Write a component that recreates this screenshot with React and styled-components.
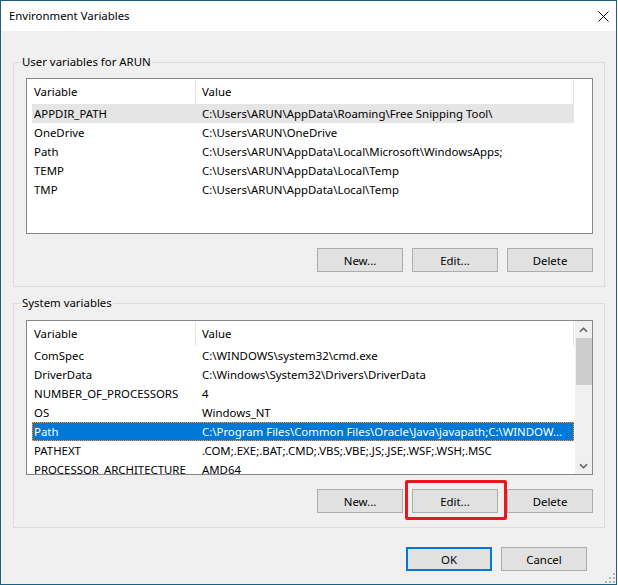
import React from "react";
import styled, { createGlobalStyle } from "styled-components";

const GlobalStyle = createGlobalStyle`
  html, body {
    margin: 0;
    padding: 0;
    background: #ffffff;
  }
  body {
    font-family: "Noto Sans", "Open Sans", sans-serif;
    font-size: 11.4px;
    color: #000000;
  }
`;

const userVars = [
  { name: "APPDIR_PATH", value: "C:\\Users\\ARUN\\AppData\\Roaming\\Free Snipping Tool\\", sel: "inactive" },
  { name: "OneDrive", value: "C:\\Users\\ARUN\\OneDrive" },
  { name: "Path", value: "C:\\Users\\ARUN\\AppData\\Local\\Microsoft\\WindowsApps;" },
  { name: "TEMP", value: "C:\\Users\\ARUN\\AppData\\Local\\Temp" },
  { name: "TMP", value: "C:\\Users\\ARUN\\AppData\\Local\\Temp" },
];

const systemVars = [
  { name: "ComSpec", value: "C:\\WINDOWS\\system32\\cmd.exe" },
  { name: "DriverData", value: "C:\\Windows\\System32\\Drivers\\DriverData" },
  { name: "NUMBER_OF_PROCESSORS", value: "4" },
  { name: "OS", value: "Windows_NT" },
  { name: "Path", value: "C:\\Program Files\\Common Files\\Oracle\\Java\\javapath;C:\\WINDOW...", sel: "active" },
  { name: "PATHEXT", value: ".COM;.EXE;.BAT;.CMD;.VBS;.VBE;.JS;.JSE;.WSF;.WSH;.MSC" },
  { name: "PROCESSOR_ARCHITECTURE", value: "AMD64" },
];

const Window = styled.div`
  position: relative;
  width: 617px;
  height: 585px;
  box-sizing: border-box;
  border: 1px solid #1b5e7e;
  background: #f0f0f0;
  display: flex;
  flex-direction: column;
`;

const TitleBar = styled.div`
  height: 30px;
  background: #ffffff;
  display: flex;
  align-items: center;
  justify-content: space-between;
  padding: 0 7px 0 8px;
`;

const Title = styled.span`
  line-height: 16px;
`;

const Body = styled.div`
  padding: 23px 11px 0 12px;
  display: flex;
  flex-direction: column;
`;

const Group = styled.fieldset`
  margin: ${(p) => p.$gap}px 0 0 0;
  width: 592px;
  min-width: 0;
  box-sizing: border-box;
  border: 1px solid #dcdcdc;
  padding: ${(p) => p.$top}px 11px 14px 12px;
`;

const Legend = styled.legend`
  padding: 0 1px;
  margin-left: -5px;
  line-height: 16px;
`;

const List = styled.div`
  height: ${(p) => p.$h}px;
  box-sizing: border-box;
  border: 1px solid #828790;
  background: #ffffff;
  display: flex;
  overflow: hidden;
`;

const ListBody = styled.div`
  flex: 1;
  padding-left: 5px;
  overflow: hidden;
`;

const HeaderRow = styled.div`
  display: flex;
  height: 25px;
  align-items: flex-end;
`;

const HeadCell = styled.div`
  width: ${(p) => p.$w}px;
  height: 24px;
  line-height: 24px;
  box-sizing: border-box;
  padding-left: ${(p) => p.$pad}px;
  border-right: 1px solid #e5e5e5;
  white-space: nowrap;
`;

const Row = styled.div`
  display: flex;
  height: 19px;
  line-height: 19px;
  width: 542px;
  box-sizing: border-box;
  background: ${(p) =>
    p.$sel === "active" ? "#0078d7" : p.$sel === "inactive" ? "#e5e5e5" : "transparent"};
  color: ${(p) => (p.$sel === "active" ? "#ffffff" : "#000000")};
  outline: ${(p) => (p.$sel === "active" ? "1px dotted #ff9b3a" : "none")};
  outline-offset: -1px;
`;

const Cell = styled.div`
  width: ${(p) => p.$w}px;
  padding-left: ${(p) => p.$pad}px;
  box-sizing: border-box;
  white-space: nowrap;
  overflow: hidden;
`;

const Scrollbar = styled.div`
  width: 17px;
  background: #f0f0f0;
  display: flex;
  flex-direction: column;
`;

const ScrollArrow = styled.div`
  height: 17px;
  display: flex;
  align-items: center;
  justify-content: center;
`;

const Thumb = styled.div`
  height: 47px;
  margin-left: 1px;
  background: #cdcdcd;
`;

const ScrollTrack = styled.div`
  flex: 1;
`;

const ButtonRow = styled.div`
  display: flex;
  justify-content: flex-end;
  gap: ${(p) => p.$gap || 9}px;
  margin-top: ${(p) => p.$top}px;
  margin-right: ${(p) => p.$right || 0}px;
`;

const Button = styled.button`
  width: 86px;
  height: 24px;
  box-sizing: border-box;
  margin: 0;
  padding: 0;
  font-family: inherit;
  font-size: 11.4px;
  color: #000000;
  background: #e1e1e1;
  border: ${(p) => (p.$default ? "2px solid #0078d7" : "1px solid #adadad")};
`;

const Highlight = styled.span`
  position: relative;
  display: inline-flex;

  &::after {
    content: "";
    position: absolute;
    left: -7px;
    top: -9px;
    right: -9px;
    bottom: -7px;
    border: 3px solid #e8161e;
    border-radius: 2px;
    pointer-events: none;
  }
`;

const Grip = styled.svg`
  position: absolute;
  right: 1px;
  bottom: 1px;
`;

const Chevron = ({ down }) => (
  <svg width="9" height="6" viewBox="0 0 9 6">
    <path
      d={down ? "M1 1.2 L4.5 4.7 L8 1.2" : "M1 4.8 L4.5 1.3 L8 4.8"}
      fill="none"
      stroke="#606060"
      strokeWidth="1.6"
    />
  </svg>
);

const VarList = ({ rows, height, scroll }) => (
  <List $h={height}>
    <ListBody>
      <HeaderRow>
        <HeadCell $w={164} $pad={2}>Variable</HeadCell>
        <HeadCell $w={378} $pad={6}>Value</HeadCell>
      </HeaderRow>
      {rows.map((r) => (
        <Row key={r.name} $sel={r.sel}>
          <Cell $w={164} $pad={2}>{r.name}</Cell>
          <Cell $w={378} $pad={6}>{r.value}</Cell>
        </Row>
      ))}
    </ListBody>
    {scroll && (
      <Scrollbar>
        <ScrollArrow>
          <Chevron />
        </ScrollArrow>
        <Thumb />
        <ScrollTrack />
        <ScrollArrow>
          <Chevron down />
        </ScrollArrow>
      </Scrollbar>
    )}
  </List>
);

export default function App() {
  return (
    <>
      <GlobalStyle />
      <Window>
        <TitleBar>
          <Title>Environment Variables</Title>
          <svg width="11" height="11" viewBox="0 0 11 11">
            <path d="M0.5 0.5 L10.5 10.5 M10.5 0.5 L0.5 10.5" stroke="#000" strokeWidth="1" />
          </svg>
        </TitleBar>
        <Body>
          <Group $top={8} $gap={0}>
            <Legend>User variables for ARUN</Legend>
            <VarList rows={userVars} height={156} />
            <ButtonRow $top={14}>
              <Button>New...</Button>
              <Button>Edit...</Button>
              <Button>Delete</Button>
            </ButtonRow>
          </Group>
          <Group $top={9} $gap={8}>
            <Legend>System variables</Legend>
            <VarList rows={systemVars} height={155} scroll />
            <ButtonRow $top={14}>
              <Button>New...</Button>
              <Highlight>
                <Button>Edit...</Button>
              </Highlight>
              <Button>Delete</Button>
            </ButtonRow>
          </Group>
          <ButtonRow $top={19} $right={18}>
            <Button $default>OK</Button>
            <Button>Cancel</Button>
          </ButtonRow>
        </Body>
        <Grip width="11" height="11" viewBox="0 0 11 11">
          <g fill="#b4b4b4">
            <rect x="9" y="1" width="2" height="2" />
            <rect x="5" y="5" width="2" height="2" />
            <rect x="9" y="5" width="2" height="2" />
            <rect x="1" y="9" width="2" height="2" />
            <rect x="5" y="9" width="2" height="2" />
            <rect x="9" y="9" width="2" height="2" />
          </g>
        </Grip>
      </Window>
    </>
  );
}
